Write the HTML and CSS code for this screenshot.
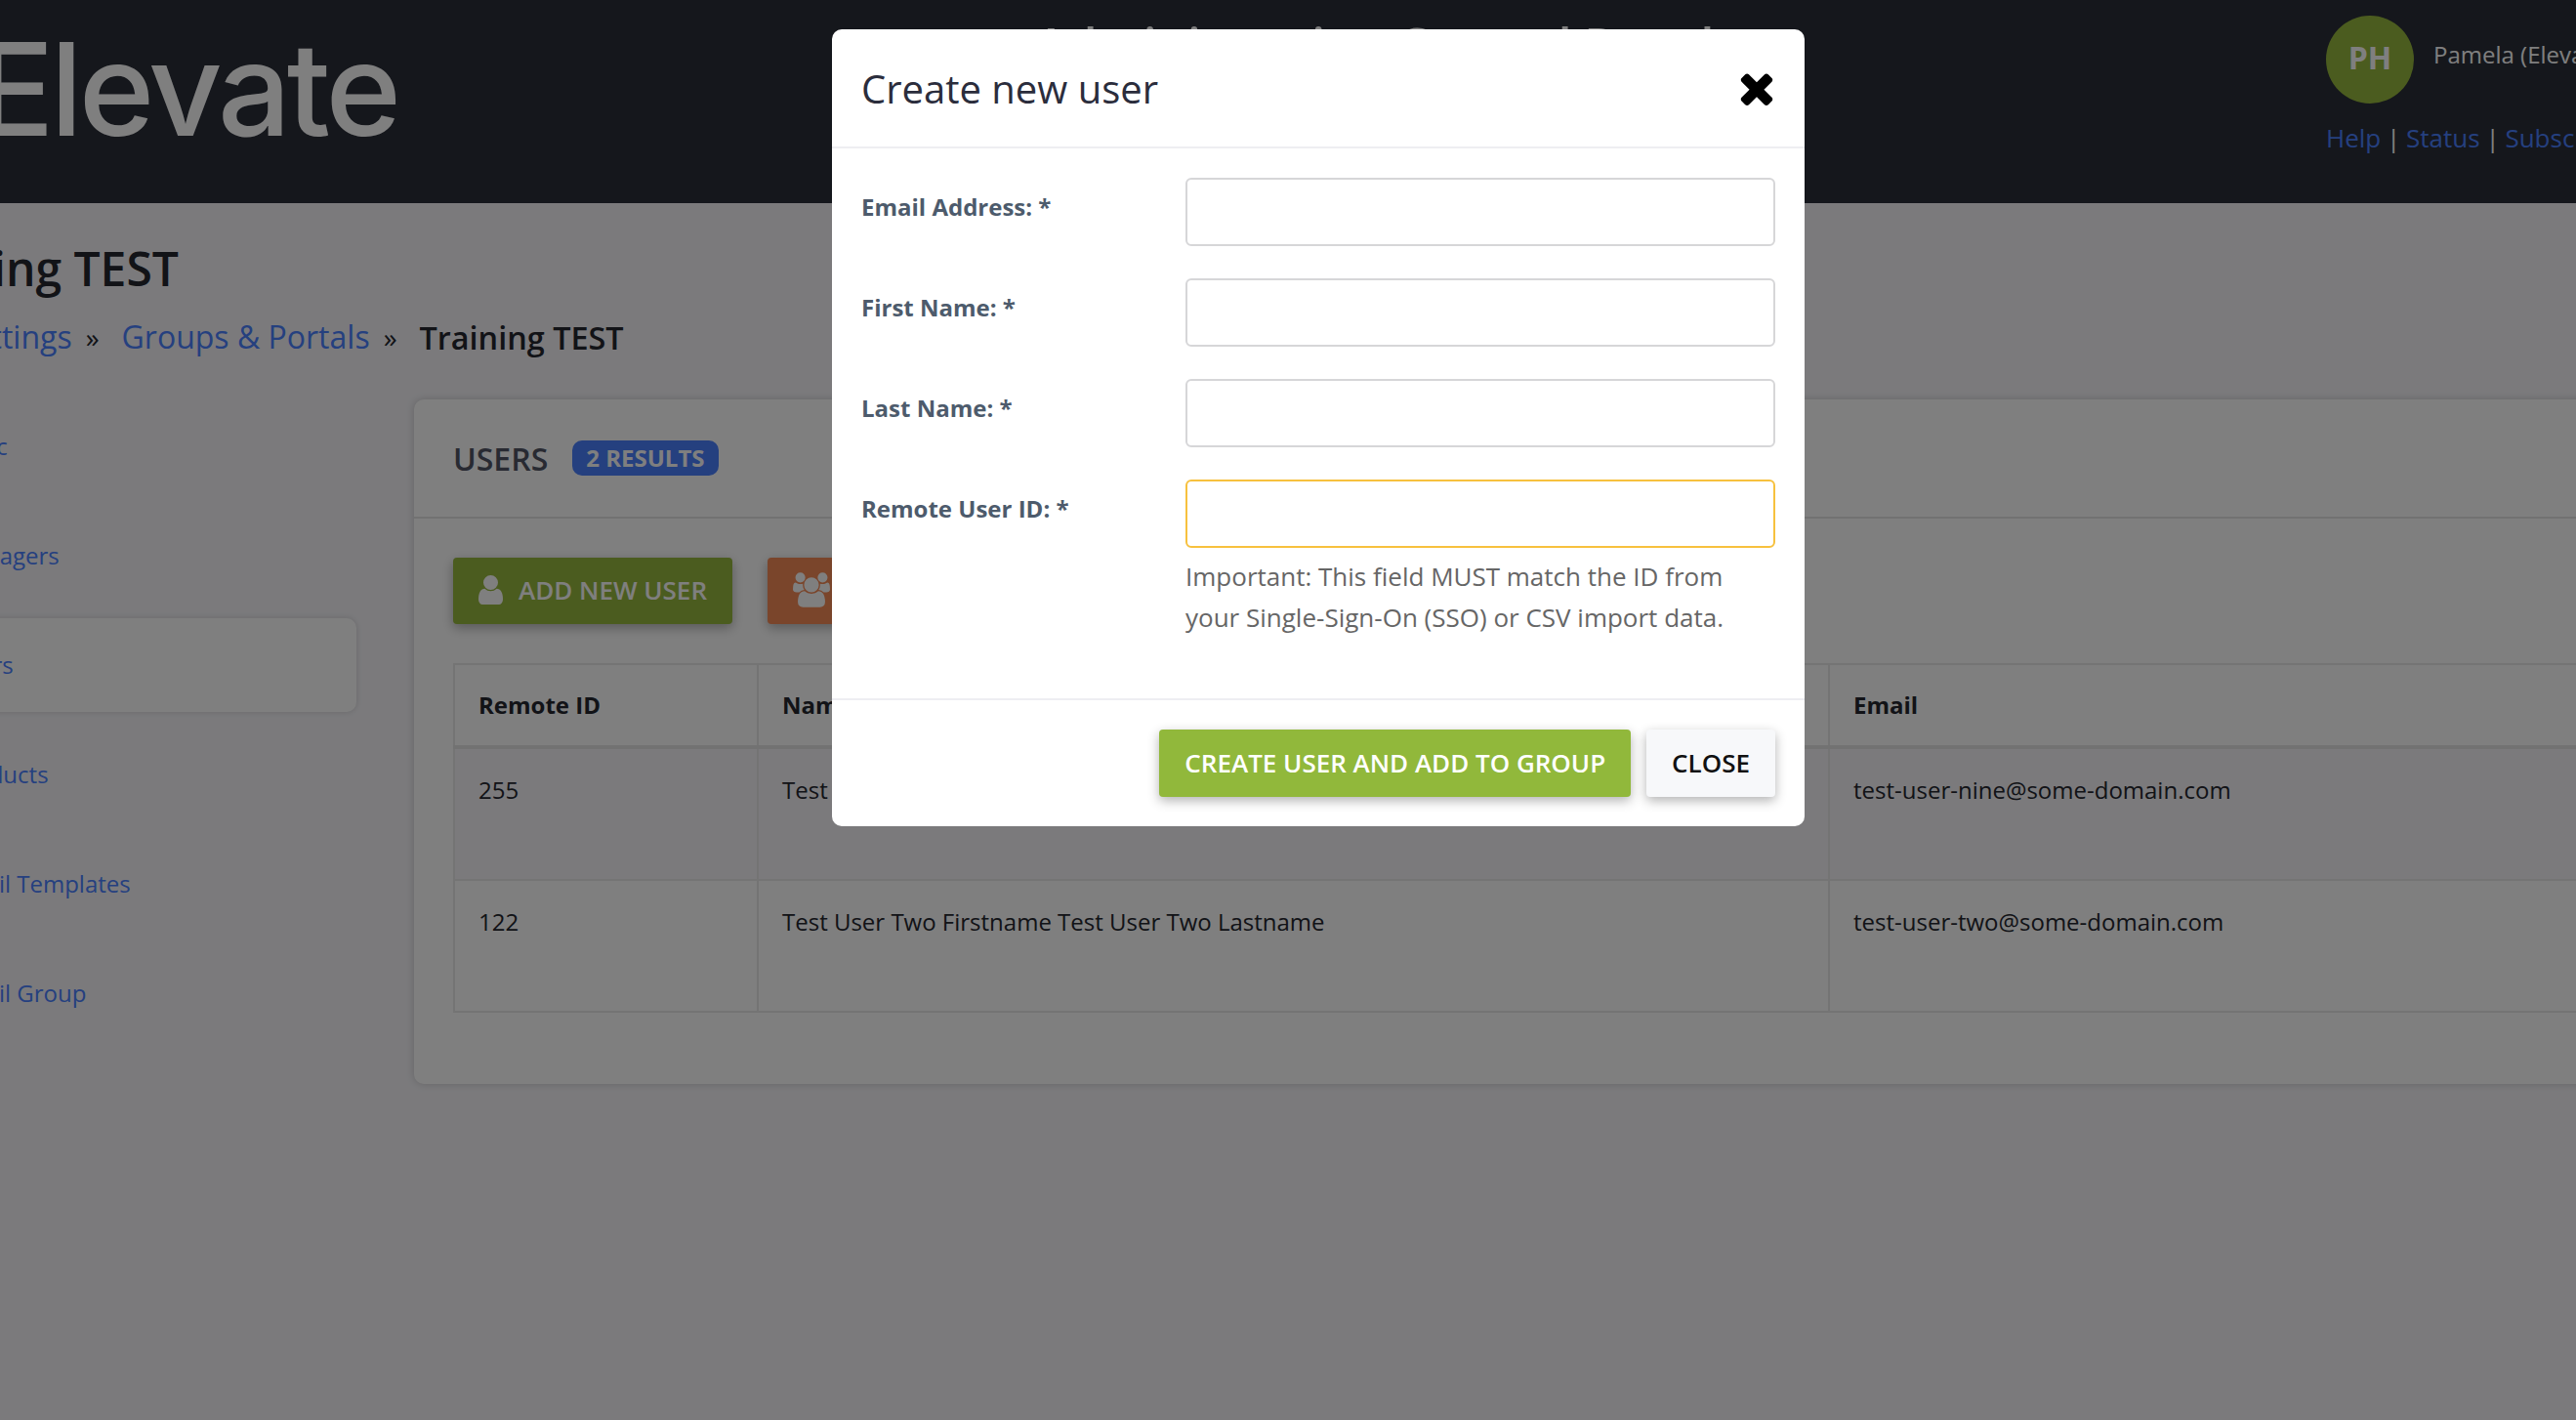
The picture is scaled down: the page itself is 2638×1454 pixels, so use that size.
FILE: index.html
```html
<!DOCTYPE html>
<html lang="en">
<head>
	<meta charset="UTF-8">
	<title>Training TEST</title>
	<link rel="stylesheet" href="styles.css">
</head>
<body>
	<div class="page">
		<header class="top">
			<div class="logo">Elevate</div>
			<div class="site-title">Administration Control Panel</div>
			<div class="account">
				<div class="account-row">
					<span class="avatar">PH</span>
					<span class="account-name">Pamela (Elevate Admin)</span>
				</div>
				<div class="account-links">
					<a href="#">Help</a> | <a href="#">Status</a> | <a href="#">Subscribe</a>
				</div>
			</div>
		</header>

		<h1 class="page-title">Training TEST</h1>
		<div class="crumbs">
			<a href="#">Settings</a>
			<span class="crumb-sep">»</span>
			<a href="#">Groups &amp; Portals</a>
			<span class="crumb-sep">»</span>
			<strong>Training TEST</strong>
		</div>

		<div class="main">
			<nav class="side">
				<a href="#">Basic</a>
				<a href="#">Managers</a>
				<a href="#" class="active">Users</a>
				<a href="#">Products</a>
				<a href="#">Email Templates</a>
				<a href="#">Email Group</a>
			</nav>

			<section class="card">
				<div class="card-head">
					<span class="card-title">USERS</span>
					<span class="badge">2 RESULTS</span>
				</div>
				<div class="card-body">
					<div class="actions">
						<a href="#" class="btn btn-green">
							<svg class="icon-user" viewBox="256 128 1280 1536"><path d="M1536 1399q0 109-62.5 187t-150.5 78h-854q-88 0-150.5-78t-62.5-187q0-85 8.5-160.5t31.5-152 58.5-131 94-89 134.5-34.5q131 128 313 128t313-128q76 0 134.5 34.5t94 89 58.5 131 31.5 152 8.5 160.5zm-256-887q0 159-112.5 271.5t-271.5 112.5-271.5-112.5-112.5-271.5 112.5-271.5 271.5-112.5 271.5 112.5 112.5 271.5z"/></svg>
							ADD NEW USER
						</a>
						<a href="#" class="btn btn-orange">
							<svg class="icon-users" viewBox="0 128 1920 1536"><path d="M593 896q-162 5-265 128h-134q-82 0-138-40.5t-56-118.5q0-353 124-353 6 0 43.5 21t97.5 42.5 119 21.5q67 0 133-23-5 37-5 66 0 139 81 256zm1071 637q0 120-73 189.5t-194 69.5h-874q-121 0-194-69.5t-73-189.5q0-53 3.5-103.5t14-109 26.5-108.5 43-97.5 62-81 85.5-53.5 111.5-20q10 0 43 21.5t73 48 107 48 135 21.5 135-21.5 107-48 73-48 43-21.5q61 0 111.5 20t85.5 53.5 62 81 43 97.5 26.5 108.5 14 109 3.5 103.5zm-1024-1277q0 106-75 181t-181 75-181-75-75-181 75-181 181-75 181 75 75 181zm704 384q0 159-112.5 271.5t-271.5 112.5-271.5-112.5-112.5-271.5 112.5-271.5 271.5-112.5 271.5 112.5 112.5 271.5zm576 225q0 78-56 118.5t-138 40.5h-134q-103-123-265-128 81-117 81-256 0-29-5-66 66 23 133 23 59 0 119-21.5t97.5-42.5 43.5-21q124 0 124 353zm-128-609q0 106-75 181t-181 75-181-75-75-181 75-181 181-75 181 75 75 181z"/></svg>
							IMPORT
						</a>
					</div>
					<table class="users">
						<colgroup>
							<col class="col-id">
							<col class="col-name">
							<col class="col-email">
						</colgroup>
						<thead>
							<tr><th>Remote ID</th><th>Name</th><th>Email</th></tr>
						</thead>
						<tbody>
							<tr class="stripe">
								<td>255</td>
								<td>Test User Nine Firstname Test User Nine Lastname</td>
								<td>test-user-nine@some-domain.com</td>
							</tr>
							<tr>
								<td>122</td>
								<td>Test User Two Firstname Test User Two Lastname</td>
								<td>test-user-two@some-domain.com</td>
							</tr>
						</tbody>
					</table>
				</div>
			</section>
		</div>
	</div>

	<div class="backdrop">
		<div class="modal">
			<div class="modal-head">
				<span class="modal-title">Create new user</span>
				<svg class="icon-close" viewBox="302 238 1188 1316"><path d="M1490 1322q0 40-28 68l-136 136q-28 28-68 28t-68-28l-294-294-294 294q-28 28-68 28t-68-28l-136-136q-28-28-28-68t28-68l294-294-294-294q-28-28-28-68t28-68l136-136q28-28 68-28t68 28l294 294 294-294q28-28 68-28t68 28l136 136q28 28 28 68t-28 68l-294 294 294 294q28 28 28 68z"/></svg>
			</div>
			<form class="modal-body">
				<label class="field-label">Email Address: *</label>
				<input class="field" type="text">
				<label class="field-label">First Name: *</label>
				<input class="field" type="text">
				<label class="field-label">Last Name: *</label>
				<input class="field" type="text">
				<label class="field-label">Remote User ID: *</label>
				<div>
					<input class="field field-focus" type="text">
					<p class="field-help">Important: This field MUST match the ID from your Single-Sign-On (SSO) or CSV import data.</p>
				</div>
			</form>
			<div class="modal-foot">
				<a href="#" class="btn btn-create">CREATE USER AND ADD TO GROUP</a>
				<a href="#" class="btn btn-close">CLOSE</a>
			</div>
		</div>
	</div>
</body>
</html>
```

FILE: styles.css
```css
html, body {
	margin: 0;
	height: 100%;
	overflow: hidden;
}
body {
	background: #f6f5f9;
	color: #24262e;
	font-family: "Open Sans", "Liberation Sans", sans-serif;
	font-size: 24px;
}
a {
	color: #4a80ff;
	text-decoration: none;
}

/* page is scrolled sideways in the shot */
.page {
	margin-left: -137px;
	width: 3000px;
}

.top {
	height: 208px;
	background: #2a2e38;
	display: flex;
	color: #fff;
}
.logo {
	width: 1197px;
	padding: 0 0 0 113px;
	box-sizing: border-box;
	font-family: Inter, "Liberation Sans", sans-serif;
	font-size: 132px;
	font-weight: 500;
	line-height: 182px;
	letter-spacing: -4px;
}
.site-title {
	width: 1322px;
	padding-top: 9px;
	font-size: 49.5px;
	line-height: 72px;
	font-weight: 600;
}
.account {
	padding-top: 16px;
}
.account-row {
	display: flex;
	gap: 20px;
}
.avatar {
	width: 90px;
	height: 90px;
	border-radius: 50%;
	background: #97b83e;
	font-size: 32px;
	font-weight: 700;
	line-height: 86px;
	text-align: center;
}
.account-name {
	line-height: 80px;
}
.account-links {
	margin-top: 15px;
	font-size: 26px;
	line-height: 40px;
	word-spacing: -1px;
}

.page-title {
	margin: 37px 0 0;
	padding-left: 10px;
	font-size: 48px;
	line-height: 60px;
	font-weight: 600;
}
.crumbs {
	margin-top: 16px;
	padding-left: 92px;
	font-size: 32px;
	line-height: 48px;
	display: flex;
	align-items: center;
	gap: 14px;
}
.crumbs strong {
	font-size: 32.4px;
	font-weight: 600;
}
.crumb-sep {
	margin-right: 9px;
	font-size: 28px;
}

.main {
	margin-top: 40px;
	display: flex;
	gap: 59px;
}
.side {
	width: 502px;
	display: flex;
	flex-direction: column;
	gap: 16px;
}
.side a {
	display: block;
	height: 96px;
	line-height: 96px;
	padding-left: 87px;
	box-sizing: border-box;
	border-radius: 0 10px 10px 0;
}
.side a.active {
	background: #fff;
	box-shadow: 0 0 6px rgba(0, 0, 0, .15);
}

.card {
	flex: 1;
	height: 701px;
	background: #fff;
	border-radius: 10px 0 0 10px;
	box-shadow: 0 0 8px rgba(0, 0, 0, .18);
}
.card-head {
	height: 120px;
	padding-left: 40px;
	border-bottom: 2px solid #e4e4e4;
	display: flex;
	align-items: center;
	gap: 25px;
}
.card-title {
	font-size: 32px;
	font-weight: 600;
	color: #515564;
}
.badge {
	height: 36px;
	padding: 0 14px;
	background: #4a80ff;
	border-radius: 10px;
	color: #fff;
	font-size: 24px;
	font-weight: 700;
	line-height: 36px;
}
.card-body {
	padding: 40px 40px 0;
}

.actions {
	display: flex;
	gap: 36px;
}
.btn {
	display: flex;
	align-items: center;
	height: 68px;
	padding-bottom: 2px;
	box-sizing: border-box;
	border-radius: 4px;
	color: #fff;
	font-size: 26px;
	font-weight: 600;
	box-shadow: 0 4px 12px rgba(0, 0, 0, .3);
}
.btn-green {
	width: 286px;
	padding-left: 26px;
	background: #97b83e;
	gap: 16px;
}
.btn-orange {
	width: 240px;
	padding-left: 26px;
	background: #f58a56;
	gap: 16px;
}
.icon-user {
	width: 25px;
	height: 30px;
	fill: #fff;
}
.icon-users {
	width: 38px;
	height: 36px;
	fill: #fff;
}

.users {
	margin-top: 40px;
	border-collapse: collapse;
	table-layout: fixed;
	width: 2300px;
}
.col-id { width: 311px; }
.col-name { width: 1097px; }
.users th, .users td {
	border: 2px solid #e8e8e8;
	padding: 21px 24px 25px;
	text-align: left;
	vertical-align: top;
	line-height: 42px;
}
.users th {
	padding: 20px 24px 20px;
	font-weight: 700;
	border-bottom: 4px solid #e4e4e4;
}
.users td {
	height: 87px;
}
.stripe td {
	background: #f6f5f9;
}

.backdrop {
	position: fixed;
	top: 0;
	left: 0;
	right: 0;
	bottom: 0;
	background: rgba(0, 0, 0, .5);
}
.modal {
	width: 996px;
	margin: 30px 0 0 852px;
	background: #fff;
	border-radius: 10px;
}
.modal-head {
	height: 120px;
	padding: 0 32px 0 30px;
	border-bottom: 2px solid #eeeef2;
	display: flex;
	align-items: center;
	justify-content: space-between;
}
.modal-title {
	font-size: 40px;
	color: #2b2d3c;
}
.icon-close {
	width: 34px;
	height: 36px;
}
.modal-body {
	padding: 30px 30px 0;
	display: grid;
	grid-template-columns: 332px 604px;
	row-gap: 33px;
	height: 563px;
	box-sizing: border-box;
	align-content: start;
}
.field-label {
	padding-top: 13px;
	font-weight: 700;
	line-height: 34px;
	color: #4d5b6c;
}
.field {
	display: block;
	width: 100%;
	height: 70px;
	box-sizing: border-box;
	border: 2px solid #d6d6d8;
	border-radius: 6px;
	background: #fff;
	outline: none;
}
.field-focus {
	border-color: #f7c13e;
}
.field-help {
	margin: 8px 0 0;
	font-size: 26px;
	line-height: 42px;
	color: #666;
}
.modal-foot {
	padding: 30px;
	border-top: 2px solid #eeeef2;
	display: flex;
	justify-content: flex-end;
	gap: 16px;
}
.btn-create {
	height: 69px;
	padding: 0 26px 2px;
	background: #91b83b;
}
.btn-close {
	height: 69px;
	padding: 0 26px 2px;
	background: #f7f8fa;
	color: #111;
}
```
